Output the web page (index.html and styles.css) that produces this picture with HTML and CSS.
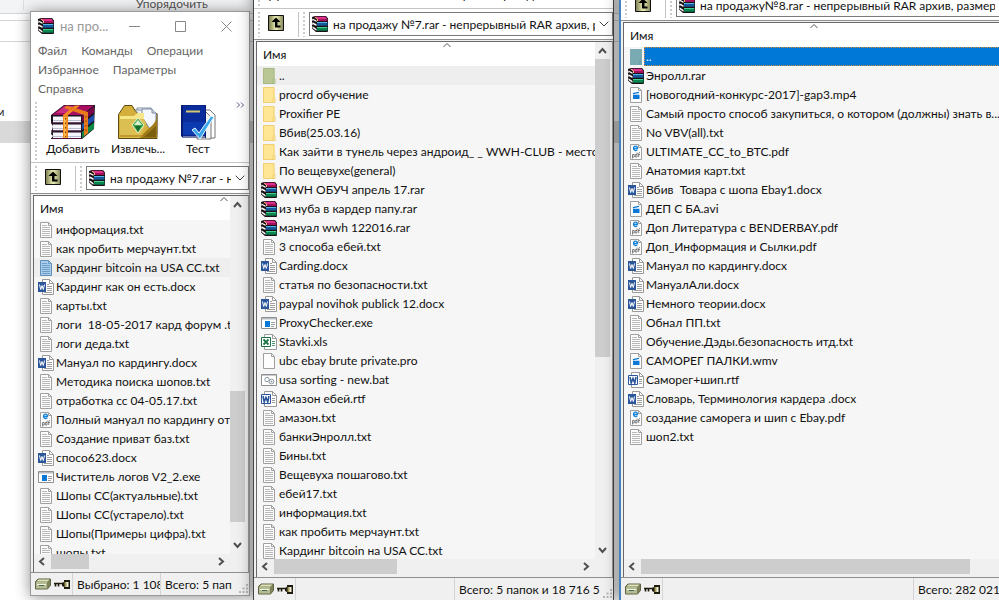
FILE: index.html
```html
<!DOCTYPE html>
<html lang="ru">
<head>
<meta charset="utf-8">
<title>WinRAR</title>
<link rel="stylesheet" href="styles.css">
</head>
<body>
<svg class="sprite" aria-hidden="true">
  <symbol id="rar" viewBox="0 0 16 16">
    <path d="M0 1 3 0h11l2 2.500v13l-1 .5H4l-4-3.500V9l1-1-1-1V5l1-1-1-1z" fill="#1a1216"/>
    <path d="M2 .7h11.500L15 3H5z" fill="#e0308c"/><path d="M5 3h10.500v2H5z" fill="#a0105c"/>
    <path d="M5 6h10l.5 1H5z" fill="#58b4e4"/><path d="M5 7h10.500v2.700H5z" fill="#15599c"/>
    <path d="M5 11h10l.5 1H5z" fill="#45d094"/><path d="M5 12h10.500v2.700H5z" fill="#0a8650"/>
    <path d="M.5 2.500 4.500 4.500v1.400L.5 3.800zM.5 6.300l4 2v1.800l-4-2zM.5 10.300l4 2.700v1.800l-4-2.900z" fill="#fff"/>
    <path d="M3 1.200 5.500 3v2" fill="none" stroke="#e8c070"/>
  </symbol>
  <symbol id="page" viewBox="0 0 16 16">
    <path d="M2.500.5h8l3 3v12h-11z" fill="#fdfdfd" stroke="#a0a0a0"/><path d="M10.500.5v3h3" fill="none" stroke="#a0a0a0"/>
  </symbol>
  <symbol id="txt" viewBox="0 0 16 16">
    <use href="#page"/><path d="M4 3.500h5M4 5.500h8M4 7.500h8M4 9.500h8M4 11.500h8M4 13.500h8" stroke="#b8b8b8" fill="none"/>
  </symbol>
  <symbol id="txtsel" viewBox="0 0 16 16">
    <path d="M2.500.5h8l3 3v12h-11z" fill="#a9cdea" stroke="#5d8fb8"/><path d="M10.500.5v3h3M4 3.500h5M4 5.500h8M4 7.500h8M4 9.500h8M4 11.500h8M4 13.500h8" stroke="#6d9fc6" fill="none"/>
  </symbol>
  <symbol id="doc" viewBox="0 0 16 16">
    <path d="M4.500.5h7l4 4v11h-11z" fill="#fff" stroke="#9a9a9a"/><path d="M11.500.5v4h4" fill="none" stroke="#9a9a9a"/>
    <path d="M9 5.500h2M9 7.500h5M9 9.500h5M9 11.500h5M6 13.500h8" stroke="#9d9d9d"/>
    <path d="M0 3h8v10H0z" fill="#2b579a"/><path d="m1.500 5.500 1.200 5L4 6.500l1.300 4 1.200-5" fill="none" stroke="#fff"/>
  </symbol>
  <symbol id="rtf" viewBox="0 0 16 16">
    <path d="M3.500.5h8l4 4v11h-12z" fill="#fff" stroke="#9a9a9a"/><path d="M11.500.5v4h4M11 7.500h3M11 9.500h3M11 11.500h3" fill="none" stroke="#9a9a9a"/>
    <path d="M.5 3.500h9v9h-9z" fill="#fff" stroke="#2b579a"/><path d="m2 5 1.200 6L5 6.500 6.800 11 8 5" fill="none" stroke="#2b579a" stroke-width="1.600"/>
  </symbol>
  <symbol id="xls" viewBox="0 0 16 16">
    <path d="M3.500.5h8l4 4v11h-12z" fill="#fff" stroke="#9a9a9a"/><path d="M11.500.5v4h4" fill="none" stroke="#9a9a9a"/><path d="M11 7.500h3M11 9.500h3M11 11.500h3" stroke="#4f9a72"/>
    <path d="M.5 3.500h9v9h-9z" fill="#fff" stroke="#1f7244"/><path d="m2.500 5.500 5 5m0-5-5 5" fill="none" stroke="#1f7244" stroke-width="1.800"/>
  </symbol>
  <symbol id="pdf" viewBox="0 0 16 16">
    <use href="#page"/><path d="M5.500 4.500h4C9.500 1.500 5.500 1.500 5.500 4.200c0 2.600 2.300 2.700 3.800 2" fill="none" stroke="#1583d8" stroke-width="1.300"/>
    <path d="M4.500 14.500v-4h1.700v2.500H4.500M9 8.500V13H7.300v-2.500H9M10.700 13V9.500q0-1 1.300-1M10 10.500h2" fill="none" stroke="#666" stroke-width=".8"/>
  </symbol>
  <symbol id="vid" viewBox="0 0 16 16">
    <use href="#page"/><path d="M5 7.700h6.500V12H5zM4.800 6l6-1.300.4 1.200-6 1.300z" fill="#0a78d6"/>
  </symbol>
  <symbol id="exe" viewBox="0 0 16 16">
    <path d="M.5 2.500h15v11H.5z" fill="#fff" stroke="#8f8f8f"/><path d="M1 3h14v1.500H1z" fill="#b5bcc2"/><path d="M4 6h5v6H4z" fill="#0a78d6"/><path d="M10 7.500h4M10 9.500h4M10 11.500h3" stroke="#9b9b9b"/>
  </symbol>
  <symbol id="bat" viewBox="0 0 16 16">
    <path d="M.5 2.500h15v11H.5z" fill="#fff" stroke="#8f8f8f"/><path d="M1 3h14v1H1z" fill="#c5cbd0"/><g fill="none" stroke="#8e9aa5"><circle cx="6" cy="7.500" r="2.200"/><circle cx="10.500" cy="9.500" r="2.400"/></g><circle cx="10.500" cy="9.500" r="1" fill="#8e9aa5"/>
  </symbol>
  <symbol id="dir" viewBox="0 0 16 16">
    <path d="M2 0h11.500v16H2z" fill="#ffe694"/><path d="M2.500.5h10.500v10l1 .5v4.500h-2M2.500.5v15h9.500v-4l1-1" fill="none" stroke="#f0d070"/>
  </symbol>
  <symbol id="updir" viewBox="0 0 16 16">
    <path d="M2 0h11.500v16H2z" fill="#b9c795"/><path d="M2.500.5h10.500v10l1 .5v4.500h-2M2.500.5v15h9.500v-4l1-1" fill="none" stroke="#a9b981"/>
  </symbol>
  <symbol id="updirsel" viewBox="0 0 16 16">
    <path d="M2 0h12v16H2z" fill="#7aabb2"/><path d="M12 11v4.500" stroke="#619aa8"/>
  </symbol>
  <symbol id="up" viewBox="0 0 16 16">
    <linearGradient id="olive"><stop stop-color="#77784c"/><stop offset=".5" stop-color="#eef0b8"/><stop offset="1" stop-color="#85865a"/></linearGradient>
    <path d="M.5.500h15v15H.5z" fill="url(#olive)" stroke="#111"/><path d="m8 2.500 4.500 4.500H9.500v3.500h3v2h-5.500V7H3.500z" fill="#000"/>
  </symbol>
  <symbol id="drive" viewBox="0 0 36 16">
    <path d="M.5 5.500 3 3h12.500v6.500l-3 3.500H.5z" fill="#7d8258" stroke="#5d6240"/><path d="M1 6h11v6.500H1z" fill="#b4bb92"/><path d="M3.500 3.500h11l-2 2H1.500z" fill="#dde2bd"/><path d="M2 8.500h9" stroke="#f2f5e2"/><path d="M4 9.500h5" stroke="#406c50"/>
    <path d="M19 7.500h10M20.500 8v2.500M23.500 8v2.500" stroke="#1d1a0c" stroke-width="1.600" fill="none"/><path d="M29 4h6v9h-6v-2l-2-1V7l2-1z" fill="#1d1a0c"/><path d="M29.500 6h3v5h-3z" fill="#a39b5a"/><path d="M31.500 6h2v5h-2z" fill="#f2f0e0"/>
  </symbol>
  <symbol id="aup" viewBox="0 0 15 17"><path d="m4 11 3.500-4 3.500 4" fill="none" stroke="#505050" stroke-width="2"/></symbol>
  <symbol id="adown" viewBox="0 0 15 17"><path d="m4 6 3.500 4L11 6" fill="none" stroke="#505050" stroke-width="2"/></symbol>
  <symbol id="aleft" viewBox="0 0 17 15"><path d="M10 4 6 7.500l4 3.500" fill="none" stroke="#505050" stroke-width="2"/></symbol>
  <symbol id="aright" viewBox="0 0 17 15"><path d="m6 4 4 3.500L6 11" fill="none" stroke="#505050" stroke-width="2"/></symbol>
  <symbol id="caret" viewBox="0 0 8 4"><path d="m.5 4 3.500-3.500L7.500 4" fill="none" stroke="#555"/></symbol>
  <symbol id="chev" viewBox="0 0 10 6"><path d="m.7.7 4.300 4.300L9.300.7" fill="none" stroke="#444"/></symbol>
  <symbol id="add" viewBox="0 0 46 36">
    <path d="M1 11 14 1h31l-1 24-12 10H1l2-3-2-2 2-8-2-3z" fill="#1b1420"/>
    <path d="M2 11 14.500 1.500H44L32 11z" fill="#a80d62"/><path d="M6 9 15 2h14l-9 7z" fill="#c8307f"/>
    <path d="m32 12 12-9.500v6L32 18z" fill="#7a0648"/><path d="m32 20 12-9.500v6L32 26z" fill="#1d4fae"/><path d="m32 28 12-9.500v6L32 34z" fill="#0f8a45"/>
    <path d="M3 12.500h28v6H3zM3 20.500h28v6H3zM3 28.500h28v6H3z" fill="#f4f4fa"/><path d="M3 16.500h28M3 24.500h28M3 32.500h28" stroke="#b9bdd0"/>
    <path d="M1 19h31M1 27h31M1 34.500h31" stroke="#4a1238"/>
    <path d="M13 11 25 1.500h5L18 11v23h-5z" fill="#f08a24"/><path d="m17 1.500 21 6.500v21l-4 3V11L14 4z" fill="#e87a1c"/>
    <path d="M15 13v21" stroke="#ffc85a" stroke-width="1.500"/><path d="M15.500 14v19M36 12v17" stroke="#7b3b0c" stroke-dasharray="1.500 3"/>
  </symbol>
  <symbol id="extract" viewBox="0 0 46 36">
    <path d="M22 4h14l6 6v20H22z" fill="#fff" stroke="#7d8ba0"/><path d="M19 6h13l4 4v15H19z" fill="#eaf0fa" stroke="#7d8ba0"/><path d="M36 4v6h6" fill="#cfd8e8" stroke="#7d8ba0"/>
    <path d="m3.500 10.500 6-9H17l3 5 2 2-1 4h10l11-3v25H3.500z" fill="#d4af3c" stroke="#5c4a12"/>
    <path d="M27 5h10l4 4v10l-6 6-8-12z" fill="#f4f7fc" stroke="#7d8ba0"/><path d="M37 5v4h4" fill="#cfd8e8" stroke="#7d8ba0"/>
    <path d="M5 12h14l3-3h7v8L5 33z" fill="#f5e68a"/><path d="M5 15h24l2 4-6 15H5z" fill="#dcbf52"/><path d="M42 13C40 22 31 25 25 34h17z" fill="#a27c1a"/><path d="M29 33h12V22z" fill="#7d5f10"/><path d="M5 31h22v2H5z" fill="#c39a2d"/>
    <path d="m23 14 6 7-6 8-6-8z" fill="#3fa34a" stroke="#e8f4d0"/><path d="m23 16 4 5h-8z" fill="#d9efd0"/><path d="m23 28 3-6h-6z" fill="#176b28"/>
  </symbol>
  <symbol id="test" viewBox="0 0 46 36">
    <path d="M26 6h9l5 5v23H26z" fill="#fff" stroke="#777"/><path d="M22 8h9l5 5v22H22z" fill="#f2f2f2" stroke="#777"/>
    <path d="M6 1h25v33H8l-2-2z" fill="#061b74"/><path d="M8 1.500h22v30H8z" fill="#0a2b9c"/><path d="M8 18h22v13H8z" fill="#0d46bd" opacity=".6"/><path d="M11 7.500h14" stroke="#d6c870" stroke-width="2"/><path d="M8 33h22" stroke="#ddd"/>
    <path d="m17 26 3-2 4 5 12-17 3 1-14 22z" fill="#39a5ea" stroke="#e9f7ff"/>
  </symbol>
  <symbol id="grip" viewBox="0 0 9 9"><path d="M7 0h2v2H7zM7 3.500h2v2H7zM7 7h2v2H7zM3.500 3.500h2v2h-2zM3.500 7h2v2h-2zM0 7h2v2H0z" fill="#b8b8b8"/></symbol>
</svg>

<div class="backdrop">
  <div class="ribbon"><span class="ribbon-tab"></span><span class="ribbon-label">Упорядочить</span></div>
  <div class="crumbs"></div>
  <div class="tree"><span>м</span><div class="tree-row"></div></div>
</div>

<section class="window first">
  <header class="titlebar">
    <svg class="ico"><use href="#rar"/></svg><h1>на про...</h1>
    <button aria-label="Свернуть"><svg viewBox="0 0 11 11"><path d="M0 5.500h11" stroke="#888"/></svg></button>
    <button aria-label="Развернуть"><svg viewBox="0 0 11 11"><path d="M.5.500h10v10H.5z" fill="none" stroke="#888"/></svg></button>
    <button aria-label="Закрыть"><svg viewBox="0 0 11 11"><path d="m.5.500 10 10m0-10-10 10" stroke="#888"/></svg></button>
  </header>
  <nav class="menu"><a href="#">Файл</a><a href="#">Команды</a><a href="#">Операции</a><a href="#">Избранное</a><a href="#">Параметры</a><a href="#">Справка</a></nav>
  <div class="toolbar">
    <i class="dots"></i>
    <button class="w66"><svg><use href="#add"/></svg>Добавить</button>
    <button class="w64"><svg><use href="#extract"/></svg>Извлечь...</button>
    <button class="w56"><svg><use href="#test"/></svg>Тест</button>
    <button class="more" aria-label="Ещё"><svg viewBox="0 0 9 6"><path d="m1 .5 2.500 2.500L1 5.500M5 .5l2.500 2.500L5 5.500" fill="none" stroke="#5a5a8a"/></svg></button>
  </div>
  <div class="address">
    <i class="dots"></i><button class="up" aria-label="Вверх"><svg class="ico"><use href="#up"/></svg></button><i class="dots sep"></i>
    <label class="combo"><svg class="ico"><use href="#rar"/></svg><select aria-label="Путь"><option>на продажу №7.rar - непрерывный RAR архив</option></select><svg class="chev"><use href="#chev"/></svg></label>
  </div>
  <div class="pane"><div class="list">
    <div class="view">
      <button class="colhead">Имя<svg><use href="#caret"/></svg></button>
      <ul>
        <li><svg><use href="#txt"/></svg>информация.txt</li>
        <li><svg><use href="#txt"/></svg>как пробить мерчаунт.txt</li>
        <li class="soft"><svg><use href="#txtsel"/></svg>Кардинг bitcoin на USA CC.txt</li>
        <li><svg><use href="#doc"/></svg>Кардинг как он есть.docx</li>
        <li><svg><use href="#txt"/></svg>карты.txt</li>
        <li><svg><use href="#txt"/></svg>логи  18-05-2017 кард форум .txt</li>
        <li><svg><use href="#txt"/></svg>логи деда.txt</li>
        <li><svg><use href="#doc"/></svg>Мануал по кардингу.docx</li>
        <li><svg><use href="#txt"/></svg>Методика поиска шопов.txt</li>
        <li><svg><use href="#txt"/></svg>отработка сс 04-05.17.txt</li>
        <li><svg><use href="#pdf"/></svg>Полный мануал по кардингу от</li>
        <li><svg><use href="#txt"/></svg>Создание приват баз.txt</li>
        <li><svg><use href="#doc"/></svg>спосо623.docx</li>
        <li><svg><use href="#exe"/></svg>Чиститель логов V2_2.exe</li>
        <li><svg><use href="#txt"/></svg>Шопы СС(актуальные).txt</li>
        <li><svg><use href="#txt"/></svg>Шопы СС(устарело).txt</li>
        <li><svg><use href="#txt"/></svg>Шопы(Примеры цифра).txt</li>
        <li><svg><use href="#txt"/></svg>шопы.txt</li>
      </ul>
    </div>
    <div class="vbar"><svg><use href="#aup"/></svg><i style="flex-grow:177"></i><i class="thumb" style="flex-grow:131"></i><i style="flex-grow:15"></i><svg><use href="#adown"/></svg></div>
    <div class="hbar"><svg><use href="#aleft"/></svg><i class="thumb" style="flex-grow:38"></i><i style="flex-grow:124"></i><svg><use href="#aright"/></svg></div>
  </div></div>
  <footer class="status"><svg class="drive"><use href="#drive"/></svg><span class="cell picked">Выбрано: 1 108</span><span class="cell rest">Всего: 5 пап</span><svg class="grip"><use href="#grip"/></svg></footer>
</section>

<section class="window second">
  <div class="toolbar">
    <i class="dots"></i>
    <button class="w66"><svg></svg>Добавить</button>
    <button class="w64"><svg></svg>Извлечь...</button>
    <button class="w56"><svg></svg>Тест</button>
    <button class="w66"><svg></svg>Просмотр</button>
    <button class="w56"><svg></svg>Удалить</button>
  </div>
  <div class="address">
    <i class="dots"></i><button class="up" aria-label="Вверх"><svg class="ico"><use href="#up"/></svg></button><i class="dots sep"></i>
    <label class="combo"><svg class="ico"><use href="#rar"/></svg><select aria-label="Путь"><option>на продажу №7.rar - непрерывный RAR архив, размер</option></select><svg class="chev"><use href="#chev"/></svg></label>
  </div>
  <div class="pane"><div class="list">
    <div class="view">
      <button class="colhead">Имя<svg><use href="#caret"/></svg></button>
      <ul>
        <li class="soft"><svg><use href="#updir"/></svg>..</li>
        <li><svg><use href="#dir"/></svg>procrd обучение</li>
        <li><svg><use href="#dir"/></svg>Proxifier PE</li>
        <li><svg><use href="#dir"/></svg>Вбив(25.03.16)</li>
        <li><svg><use href="#dir"/></svg>Как зайти в тунель через андроид_ _ WWH-CLUB - место н</li>
        <li><svg><use href="#dir"/></svg>По вещевухе(general)</li>
        <li><svg><use href="#rar"/></svg>WWH ОБУЧ апрель 17.rar</li>
        <li><svg><use href="#rar"/></svg>из нуба в кардер папу.rar</li>
        <li><svg><use href="#rar"/></svg>мануал wwh 122016.rar</li>
        <li><svg><use href="#txt"/></svg>3 способа ебей.txt</li>
        <li><svg><use href="#doc"/></svg>Carding.docx</li>
        <li><svg><use href="#txt"/></svg>статья по безопасности.txt</li>
        <li><svg><use href="#doc"/></svg>paypal novihok publick 12.docx</li>
        <li><svg><use href="#exe"/></svg>ProxyChecker.exe</li>
        <li><svg><use href="#xls"/></svg>Stavki.xls</li>
        <li><svg><use href="#page"/></svg>ubc ebay brute private.pro</li>
        <li><svg><use href="#bat"/></svg>usa sorting - new.bat</li>
        <li><svg><use href="#rtf"/></svg>Амазон ебей.rtf</li>
        <li><svg><use href="#txt"/></svg>амазон.txt</li>
        <li><svg><use href="#txt"/></svg>банкиЭнролл.txt</li>
        <li><svg><use href="#txt"/></svg>Бины.txt</li>
        <li><svg><use href="#txt"/></svg>Вещевуха пошагово.txt</li>
        <li><svg><use href="#txt"/></svg>ебей17.txt</li>
        <li><svg><use href="#txt"/></svg>информация.txt</li>
        <li><svg><use href="#txt"/></svg>как пробить мерчаунт.txt</li>
        <li><svg><use href="#txt"/></svg>Кардинг bitcoin на USA CC.txt</li>
      </ul>
    </div>
    <div class="vbar"><svg><use href="#aup"/></svg><i class="thumb" style="flex-grow:298"></i><i style="flex-grow:185"></i><svg><use href="#adown"/></svg></div>
    <div class="hbar"><svg><use href="#aleft"/></svg><i class="thumb" style="flex-grow:123"></i><i style="flex-grow:180"></i><svg><use href="#aright"/></svg></div>
  </div></div>
  <footer class="status"><svg class="drive"><use href="#drive"/></svg><span class="cell rest"></span><span class="cell total">Всего: 5 папок и 18 716 57</span><svg class="grip"><use href="#grip"/></svg></footer>
</section>

<section class="window third">
  <div class="address">
    <i class="dots"></i><button class="up" aria-label="Вверх"><svg class="ico"><use href="#up"/></svg></button><i class="dots sep"></i>
    <label class="combo"><svg class="ico"><use href="#rar"/></svg><select aria-label="Путь"><option>на продажу№8.rar - непрерывный RAR архив, размер исходных</option></select></label>
  </div>
  <div class="pane"><div class="list">
    <div class="view">
      <button class="colhead">Имя<svg><use href="#caret"/></svg></button>
      <ul>
        <li class="picked-row"><svg><use href="#updirsel"/></svg><span>..</span></li>
        <li><svg><use href="#rar"/></svg>Энролл.rar</li>
        <li><svg><use href="#vid"/></svg>[новогодний-конкурс-2017]-gap3.mp4</li>
        <li><svg><use href="#txt"/></svg>Самый просто способ закупиться, о котором (должны) знать в...</li>
        <li><svg><use href="#txt"/></svg>No VBV(all).txt</li>
        <li><svg><use href="#pdf"/></svg>ULTIMATE_CC_to_BTC.pdf</li>
        <li><svg><use href="#txt"/></svg>Анатомия карт.txt</li>
        <li><svg><use href="#doc"/></svg>Вбив  Товара с шопа Ebay1.docx</li>
        <li><svg><use href="#vid"/></svg>ДЕП С БА.avi</li>
        <li><svg><use href="#pdf"/></svg>Доп Литература с BENDERBAY.pdf</li>
        <li><svg><use href="#pdf"/></svg>Доп_Информация и Сылки.pdf</li>
        <li><svg><use href="#doc"/></svg>Мануал по кардингу.docx</li>
        <li><svg><use href="#doc"/></svg>МануалАли.docx</li>
        <li><svg><use href="#doc"/></svg>Немного теории.docx</li>
        <li><svg><use href="#txt"/></svg>Обнал ПП.txt</li>
        <li><svg><use href="#txt"/></svg>Обучение.Дэды.безопасность итд.txt</li>
        <li><svg><use href="#vid"/></svg>САМОРЕГ ПАЛКИ.wmv</li>
        <li><svg><use href="#rtf"/></svg>Саморег+шип.rtf</li>
        <li><svg><use href="#doc"/></svg>Словарь, Терминология кардера .docx</li>
        <li><svg><use href="#pdf"/></svg>создание саморега и шип с Ebay.pdf</li>
        <li><svg><use href="#txt"/></svg>шоп2.txt</li>
      </ul>
    </div>
    <div class="hbar"><svg><use href="#aleft"/></svg><i class="thumb" style="flex-grow:326"></i><i style="flex-grow:32"></i></div>
  </div></div>
  <footer class="status"><svg class="drive"><use href="#drive"/></svg><span class="cell rest"></span><span class="cell size">Всего: 282 021 8</span></footer>
</section>
</body>
</html>
```
FILE: styles.css
```css
* { box-sizing: border-box; }
html, body { height: 100%; }
body { margin: 0; overflow: hidden; position: relative; background: #fff; color: #111; font: 12px/19px Lato, "Open Sans", sans-serif; }
button, select { font: inherit; color: inherit; border: 0; padding: 0; background: none; }
ul, h1 { margin: 0; padding: 0; list-style: none; }
svg { display: block; flex: none; }
.sprite { position: absolute; width: 0; height: 0; }
.ico { width: 16px; height: 16px; }

/* Explorer window behind the archives */
.backdrop { height: 100%; }
.ribbon { display: flex; height: 14px; background: #f3f4f6; border-bottom: 1px solid #d3d5d8; color: #555; font-size: 12px; line-height: 8px; }
.ribbon-tab { width: 24px; height: 10px; border-right: 1px solid #dcdee0; }
.ribbon-label { margin-left: 112px; }
.crumbs { height: 22px; margin-top: 6px; border: solid #d5d5d5; border-width: 1px 0; }
.tree { padding-top: 60px; color: #333; }
.tree span { display: block; margin-left: -4px; }
.tree-row { height: 22px; background: #d9d9d9; }

/* Windows */
.window { position: absolute; display: flex; flex-direction: column; overflow: hidden; background: #fff; border: 1px solid #9a9a9a; box-shadow: 0 1px 14px rgba(0, 0, 0, .45); }
.first { left: 30px; top: 11px; bottom: 4px; width: 220px; }
.second { left: 253px; top: -55px; bottom: 0; width: 361px; border-color: #444; border-width: 0 1px; }
.third { left: 619px; top: -10px; bottom: 0; right: -4px; border: 0; border-left: 2px solid #4682bd; }

.titlebar { display: flex; align-items: center; height: 28px; padding-left: 7px; color: #999; }
.titlebar h1 { flex: 1; min-width: 0; padding-left: 6px; font-size: 13px; font-weight: normal; white-space: nowrap; }
.titlebar button { display: grid; place-items: center; width: 46px; height: 28px; }
.titlebar button svg { width: 11px; height: 11px; }
.menu { display: flex; flex-wrap: wrap; column-gap: 14px; padding: 1px 20px 1px 7px; }
.menu a { color: #666; text-decoration: none; }

.toolbar { display: flex; height: 64px; flex: none; padding-left: 4px; border-bottom: 1px solid #c4c4c4; }
.toolbar button { display: flex; flex-direction: column; align-items: center; padding-top: 5px; white-space: nowrap; line-height: 18px; }
.toolbar button svg { width: 46px; height: 36px; }
.toolbar .dots { margin-right: 3px; }
.w66 { width: 66px; }
.w64 { width: 64px; }
.w56 { width: 56px; }
.toolbar .more { margin: 0 4px 0 auto; padding-top: 3px; }
.toolbar .more svg { width: 9px; height: 6px; }
.dots { flex: none; width: 2px; margin: 3px 0 2px; background: repeating-linear-gradient(#ccc 0 2px, transparent 2px 4px); }

.address { display: flex; flex: none; height: 30px; padding-left: 4px; }
.up { align-self: flex-start; margin: 6px 14px 0 8px; }
.sep { width: 7px; border-left: 1px solid #c4c4c4; background: repeating-linear-gradient(#ccc 0 2px, transparent 2px 4px) right / 2px 100% no-repeat; }
.combo { display: flex; align-items: center; flex: 1; min-width: 0; height: 24px; margin: 3px 0 0 4px; padding: 0 3px 0 2px; border: 1px solid #7a7a7a; }
.combo select { flex: 1; min-width: 0; height: 20px; margin: 0 4px 0 5px; appearance: none; outline: 0; overflow: hidden; text-overflow: clip; }
.chev { width: 10px; height: 6px; }

/* File list */
.pane { display: flex; flex: 1; min-height: 0; padding: 1px 0 0 2px; background: #f0f0f0; border: solid #8f8f8f; border-width: 1px 0; }
.list { flex: 1; min-width: 0; display: grid; grid-template: minmax(0, 1fr) 15px / minmax(0, 1fr) auto; padding: 0 2px 3px 0; border: 1px solid #696969; border-right-color: #9a9a9a; border-bottom: 0; }
.third .list { padding-right: 0; }
.view { overflow: hidden; background: #f6f6f6; }
.colhead { display: flex; position: relative; align-items: center; width: 380px; height: 24px; padding-left: 6px; background: #fff; }
.colhead svg { position: absolute; top: 1px; left: 50%; width: 8px; height: 4px; margin-left: -4px; }
.view li { display: flex; align-items: center; height: 19px; padding-left: 4px; white-space: pre; }
.view li svg { width: 16px; height: 16px; margin-right: 2px; }
.soft { background: #eee; }
.picked-row { color: #fff; }
.view .picked-row svg { margin-right: 0; }
.picked-row span { flex: 1; padding-left: 1px; background: #0078d7; border: 1px dotted #d88a3a; line-height: 17px; }

.vbar { display: flex; flex-direction: column; width: 15px; background: #f0f0f0; }
.first .vbar { margin-right: 1px; }
.vbar svg { width: 15px; height: 17px; }
.hbar { display: flex; grid-row: 2; min-width: 0; background: #f0f0f0; }
.hbar svg { width: 17px; height: 15px; }
.vbar i, .hbar i { flex: 1 1 0; }
.thumb { background: #cdcdcd; }

.status { display: flex; align-items: center; flex: none; height: 22px; padding-left: 4px; background: #f0f0f0; }
.drive { width: 36px; height: 16px; margin-right: 1px; }
.cell { align-self: stretch; padding-left: 4px; overflow: hidden; white-space: nowrap; line-height: 24px; border-left: 1px solid #d4d4d4; }
.rest { flex: 1; min-width: 0; }
.picked { width: 88px; }
.total { width: 146px; }
.size { width: 90px; }
.grip { align-self: flex-end; width: 9px; height: 9px; margin: 0 1px 2px 3px; }
```
